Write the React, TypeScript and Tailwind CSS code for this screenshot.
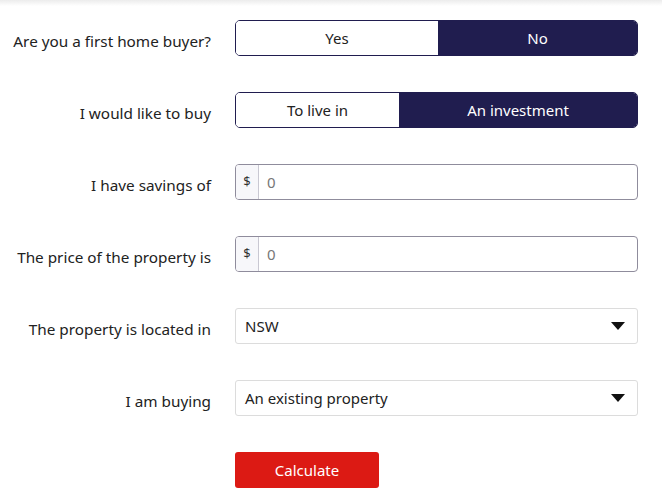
import { useState } from 'react';

const font = { fontFamily: '"Noto Sans", "Open Sans", sans-serif' };

function Row({ label, children }: { label: string; children: React.ReactNode }) {
  return (
    <div className="flex items-center h-[36px]">
      <label className="w-[212px] pr-[1px] pt-[6px] text-right text-[15.3px] text-[#222]">{label}</label>
      <div className="ml-[23px] w-[403px]">{children}</div>
    </div>
  );
}

function Toggle({ options, value, onChange, widths }: { options: string[]; value: string; onChange: (v: string) => void; widths: string[] }) {
  return (
    <div className="flex h-[36px] rounded-[5px] border border-[#201d4f] overflow-hidden">
      {options.map((o, i) => (
        <button
          key={o}
          onClick={() => onChange(o)}
          className={`${widths[i]} text-[15px] ${value === o ? 'bg-[#201d4f] text-white' : 'bg-white text-[#222]'}`}
        >
          {o}
        </button>
      ))}
    </div>
  );
}

function Money() {
  return (
    <div className="flex h-[36px] rounded-[4px] border border-[#8f8c9c] overflow-hidden">
      <span className="w-[23px] flex items-center justify-center bg-[#f7f7fa] border-r border-[#c9c8d2] text-[13px] text-[#333]">$</span>
      <input className="flex-1 px-[8px] text-[15px] text-[#777] outline-none" defaultValue="0" />
    </div>
  );
}

function Select({ value }: { value: string }) {
  return (
    <div className="flex items-center justify-between h-[36px] rounded-[3px] border border-[#dcdcdc] pl-[9px] pr-[12px]">
      <span className="text-[15px] text-[#222]">{value}</span>
      <svg width="14" height="8" viewBox="0 0 14 8"><path d="M0 0h14L7 8z" fill="#111" /></svg>
    </div>
  );
}

export default function App() {
  const [first, setFirst] = useState('No');
  const [buy, setBuy] = useState('An investment');
  return (
    <div className="min-h-[495px] bg-white relative" style={font}>
      <div className="absolute top-0 left-0 right-0 h-[6px] bg-gradient-to-b from-[#ececec] to-white" />
      <div className="flex flex-col gap-[36px] pt-[20px]">
        <Row label="Are you a first home buyer?">
          <Toggle options={['Yes', 'No']} value={first} onChange={setFirst} widths={['w-[202px]', 'flex-1']} />
        </Row>
        <Row label="I would like to buy">
          <Toggle options={['To live in', 'An investment']} value={buy} onChange={setBuy} widths={['w-[163px]', 'flex-1']} />
        </Row>
        <Row label="I have savings of"><Money /></Row>
        <Row label="The price of the property is"><Money /></Row>
        <Row label="The property is located in"><Select value="NSW" /></Row>
        <Row label="I am buying"><Select value="An existing property" /></Row>
        <div className="pl-[235px]">
          <button className="w-[144px] h-[36px] rounded-[3px] bg-[#dc1a14] text-white text-[15px]">Calculate</button>
        </div>
      </div>
    </div>
  );
}
